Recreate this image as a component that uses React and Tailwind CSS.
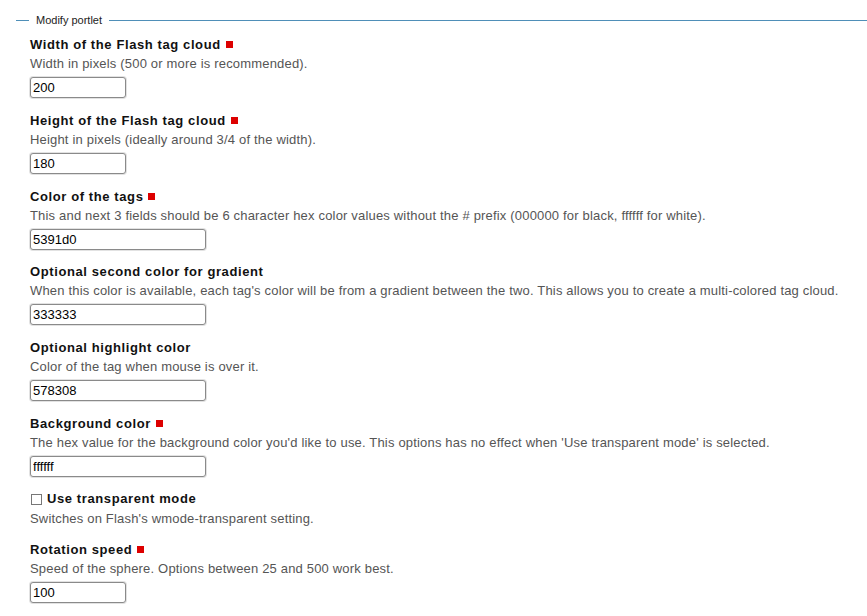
const fields = [
    { label: 'Width of the Flash tag cloud', required: true, help: 'Width in pixels (500 or more is recommended).', value: '200', wide: false },
    { label: 'Height of the Flash tag cloud', required: true, help: 'Height in pixels (ideally around 3/4 of the width).', value: '180', wide: false },
    { label: 'Color of the tags', required: true, help: 'This and next 3 fields should be 6 character hex color values without the # prefix (000000 for black, ffffff for white).', value: '5391d0', wide: true },
    { label: 'Optional second color for gradient', required: false, help: "When this color is available, each tag's color will be from a gradient between the two. This allows you to create a multi-colored tag cloud.", value: '333333', wide: true },
    { label: 'Optional highlight color', required: false, help: 'Color of the tag when mouse is over it.', value: '578308', wide: true },
    { label: 'Background color', required: true, help: "The hex value for the background color you'd like to use. This options has no effect when 'Use transparent mode' is selected.", value: 'ffffff', wide: true },
    { checkbox: true, label: 'Use transparent mode', help: "Switches on Flash's wmode-transparent setting." },
    { label: 'Rotation speed', required: true, help: 'Speed of the sphere. Options between 25 and 500 work best.', value: '100', wide: false },
];

function Required() {
    return <span className="inline-block w-[7px] h-[7px] bg-[#dd0000] ml-[5px] align-[1px]" title="Required" />;
}

function Field({ f }) {
    if (f.checkbox) {
        return (
            <div className="mb-[12.75px]">
                <label className="flex items-center h-[19px] font-bold tracking-[0.6px] text-[#111]">
                    <input type="checkbox" className="appearance-none w-[11px] h-[11px] border border-[#777] bg-white mr-[5px] ml-[1px]" />
                    {f.label}
                </label>
                <div className="h-[19px] leading-[19px] tracking-[0.18px] text-[#555]">{f.help}</div>
            </div>
        );
    }
    return (
        <div className="mb-[12.75px]">
            <label className="block h-[19px] leading-[19px] font-bold tracking-[0.6px] text-[#111]">
                {f.label}
                {f.required && <Required />}
            </label>
            <div className="h-[19px] leading-[19px] tracking-[0.18px] text-[#555]">{f.help}</div>
            <input
                type="text"
                defaultValue={f.value}
                className={`mt-[4px] block h-[21px] ${f.wide ? 'w-[176px]' : 'w-[96px]'} border border-[#8a8a8a] rounded-[3px] px-[2px] text-[13px] text-black bg-white shadow-[0_0_0_1px_#e2e2e2] outline-none`}
            />
        </div>
    );
}

export default function App() {
    return (
        <div className="bg-white w-[867px] h-[616px] overflow-hidden text-[13px] font-['Liberation_Sans',Arial,sans-serif]">
            <div className="flex items-center pt-[13px] pl-[16px]">
                <span className="w-[13px] h-px bg-[#4f8fb8]" />
                <span className="px-[7px] text-[11px] leading-[14px] text-[#222]">Modify portlet</span>
                <span className="flex-1 h-px bg-[#4f8fb8]" />
            </div>
            <div className="pl-[30px] pt-[8px]">
                {fields.map((f) => (
                    <Field key={f.label} f={f} />
                ))}
            </div>
        </div>
    );
}
